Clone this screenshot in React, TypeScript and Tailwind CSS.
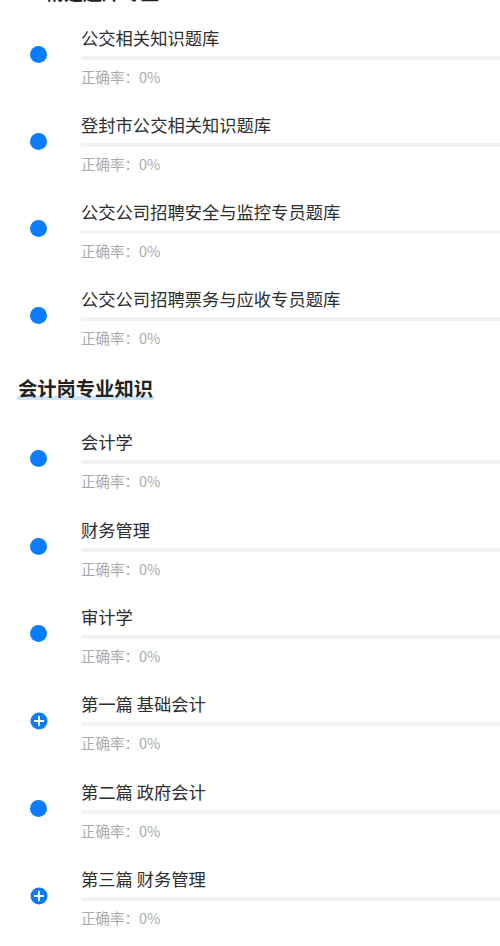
import React from "react";

const font = { fontFamily: '"Noto Sans CJK SC", "Noto Sans", sans-serif' };

function Dot({ plus }: { plus?: boolean }) {
  if (plus) {
    return (
      <svg width="18" height="18" viewBox="0 0 18 18">
        <circle cx="9" cy="9" r="8.5" fill="#0a7cff" />
        <path d="M9 4.8v8.4M4.8 9h8.4" stroke="#fff" strokeWidth="2" strokeLinecap="round" />
      </svg>
    );
  }
  return <div className="w-[17px] h-[17px] rounded-full bg-[#0a7cff]" />;
}

function Item({ title, plus }: { title: string; plus?: boolean }) {
  return (
    <div className="h-[87.3px] flex pt-[12.5px]">
      <div className="w-[81px] shrink-0 flex justify-start pl-[30px] pt-[20px]">
        <Dot plus={plus} />
      </div>
      <div className="flex-1 flex flex-col">
        <div className="text-[17.3px] leading-[24px] text-[#2e2e2e]">{title}</div>
        <div className="mt-[6px] h-[4px] bg-[#f3f3f3]" />
        <div className="mt-[7px] text-[14.5px] leading-[20px] text-[#aaa]">正确率：0%</div>
      </div>
    </div>
  );
}

function Heading({ text }: { text: string }) {
  return (
    <div className="h-[55.8px] pt-[12.8px] pl-[18px]">
      <span className="relative inline-block text-[19.3px] leading-[26px] font-bold text-[#222]">
        <span className="absolute left-[-1px] right-[-1px] bottom-[1px] h-[4px] bg-[#cde4fa]" />
        <span className="relative">{text}</span>
      </span>
    </div>
  );
}

export default function App() {
  const s1 = ["公交相关知识题库", "登封市公交相关知识题库", "公交公司招聘安全与监控专员题库", "公交公司招聘票务与应收专员题库"];
  const s2: [string, boolean][] = [
    ["会计学", false],
    ["财务管理", false],
    ["审计学", false],
    ["第一篇 基础会计", true],
    ["第二篇 政府会计", false],
    ["第三篇 财务管理", true],
  ];
  return (
    <div className="w-[500px] h-[946px] overflow-hidden bg-white" style={font}>
      <div className="relative h-[13px]">
        <div className="absolute left-0 bottom-[6px] h-[30px] flex items-center pl-[17px] gap-[16px]">
          <div className="w-[12px] h-[14px] rounded-full bg-[#ff8a4c] opacity-80" />
          <span className="text-[19px] leading-[26px] font-bold text-[#222]">精选题库专区</span>
        </div>
      </div>
      {s1.map((t) => (
        <Item key={t} title={t} />
      ))}
      <Heading text="会计岗专业知识" />
      {s2.map(([t, p]) => (
        <Item key={t} title={t} plus={p} />
      ))}
    </div>
  );
}
